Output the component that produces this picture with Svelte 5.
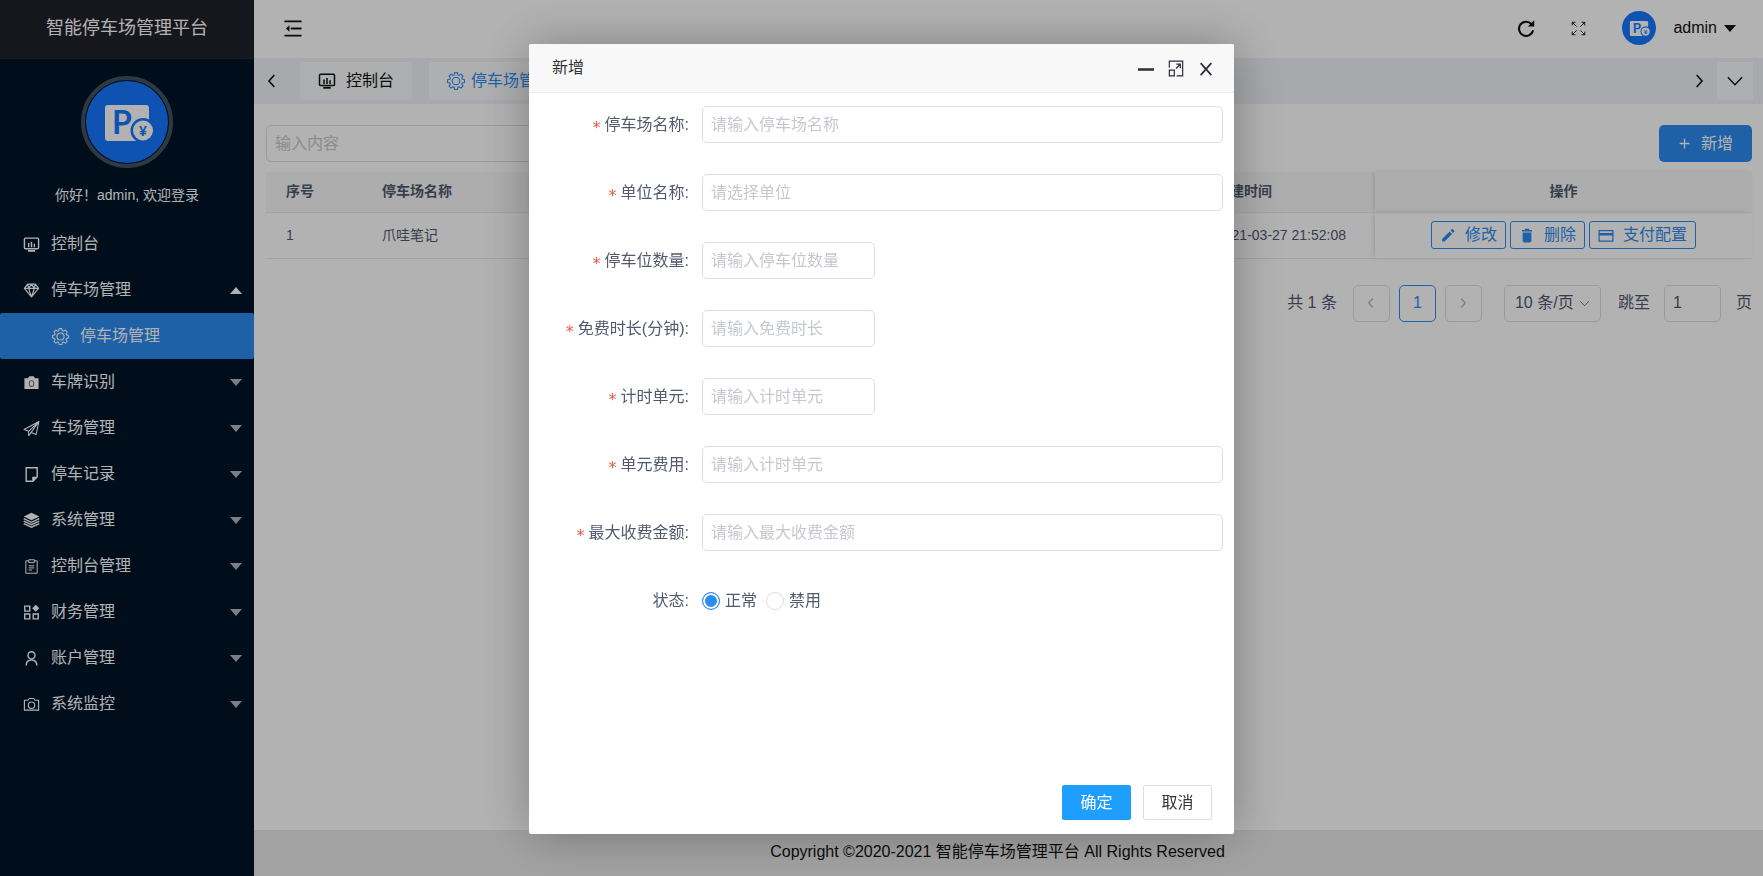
<script>
    const icons = {
        console: '<rect x="2" y="3" width="20" height="15" rx="1.5" fill="none" stroke="currentColor" stroke-width="2"/><path d="M8 10v6M12 8v8M16 11v5" stroke="currentColor" stroke-width="2"/><path d="M7 21h10" stroke="currentColor" stroke-width="2.5"/>',
        diamond: '<path d="M6.5 3h11L22 9 12 21 2 9zM2 9h20M8 9l4 12 4-12M6.5 3 8 9l4-6 4 6 1.5-6" fill="none" stroke="currentColor" stroke-width="1.7" stroke-linejoin="round"/>',
        gear: '<path d="M10 1.5h4l.8 3.2 1.7.7 2.8-1.7 2.8 2.9-1.7 2.7.7 1.8 3.2.8v3.800l-3.200.8-.7 1.700 1.700 2.800-2.800 2.800-2.800-1.700-1.700.7-.8 3.200h-4l-.8-3.200-1.700-.7-2.800 1.700L2 21l1.700-2.800-.7-1.700-3.200-.8v-3.800l3.200-.8.7-1.800L2 6.600l2.700-2.900 2.800 1.700 1.700-.7z" transform="translate(1 -.5) scale(.92)" fill="none" stroke="currentColor" stroke-width="1.6" stroke-linejoin="round"/><circle cx="12" cy="12" r="5" fill="none" stroke="currentColor" stroke-width="1.5"/>',
        camera: '<path d="M2 6h5l2-3h6l2 3h5v15H2z" fill="currentColor"/><rect x="9" y="9.5" width="6" height="8" rx="2.5" fill="none" stroke="#6b7480" stroke-width="1.5"/>',
        plane: '<path d="M22.5 2 18.5 20.5 11.5 17.5 8 22V16L1.5 13.5zM22.5 2 8 16M11.5 17.5 22.5 2" fill="none" stroke="currentColor" stroke-width="1.5" stroke-linejoin="round"/>',
        note: '<path d="M4.5 2.5h15.5v13L14 21.5H4.5z" fill="none" stroke="currentColor" stroke-width="2"/><path d="M13 22v-7h7z" fill="currentColor"/>',
        layers: '<path d="M12 1 23 6.5 12 11.5 1 6.5z" fill="currentColor"/><path d="M1 9.5 12 14.5 23 9.5M1 13 12 18 23 13M1 16.5 12 21.5 23 16.5" fill="none" stroke="currentColor" stroke-width="2"/>',
        clipboard: '<path d="M8 4H4v17.500h16V4h-4M8 2.500h8v4H8zM8 11h8M8 14h8M8 17h5" fill="none" stroke="currentColor" stroke-width="1.4"/>',
        apps: '<path d="M2.500 3h7v7h-7zM2.500 14h7v7h-7zM14.500 14h7v7h-7z" fill="none" stroke="currentColor" stroke-width="2"/><path d="m18 1 5 5-5 5-5-5z" fill="currentColor"/>',
        user: '<circle cx="12" cy="7.500" r="5" fill="none" stroke="currentColor" stroke-width="2"/><path d="M4.500 22c0-5 3-8 7.500-8s7.500 3 7.500 8" fill="none" stroke="currentColor" stroke-width="2"/>',
        monitor: '<path d="M2 6h5l2-2.500h6L17 6h5v14H2z" fill="none" stroke="currentColor" stroke-width="1.6" stroke-linejoin="round"/><circle cx="12" cy="13" r="4.5" fill="none" stroke="currentColor" stroke-width="1.6"/>',
        fold: '<path d="M1 2h22M10 12h13M1 22h22" stroke="currentColor" stroke-width="2.6" stroke-linecap="round"/><path d="M7 7.500v9l-5-4.500z" fill="currentColor"/>',
        refresh: '<path d="M19.500 7A9.500 9.500 0 1 0 21.500 15" fill="none" stroke="currentColor" stroke-width="2.8"/><path d="M23 1.500V10h-8.500z" fill="currentColor"/>',
        full: '<path d="M2 7V2h5M2 2l7 7M17 2h5v5M22 2l-7 7M2 17v5h5M2 22l7-7M22 17v5h-5M22 22l-7-7" fill="none" stroke="currentColor" stroke-width="1.5"/>',
        left: '<path d="m15.500 3-8 9 8 9" fill="none" stroke="currentColor" stroke-width="2.4"/>',
        right: '<path d="m8.500 3 8 9-8 9" fill="none" stroke="currentColor" stroke-width="2.4"/>',
        down: '<path d="m2.500 7 9.500 10L21.500 7" fill="none" stroke="currentColor" stroke-width="1.8"/>',
        plus: '<path d="M12 3v18M3 12h18" stroke="currentColor" stroke-width="2.4"/>',
        edit: '<path d="M2.500 21.500v-4L14.500 5.500l4 4-12 12zM16 4l2-2q1-.8 2 0l2 2q.8 1 0 2l-2 2z" fill="currentColor"/>',
        trash: '<path d="M4 3h4l1-2h6l1 2h4v2.500H4zM5 7h14v13.500q0 2.500-2.500 2.500h-9Q5 23 5 20.500z" fill="currentColor"/>',
        card: '<path d="M1 4h22v17H1z" fill="none" stroke="currentColor" stroke-width="2"/><path d="M1 8h22v4H1z" fill="currentColor"/>',
        expand: '<path d="M2 11V1h20v22h-9M2 14.500h7.500V23H2zM12 12l6-6M12.500 5.500H18.500v6" fill="none" stroke="currentColor" stroke-width="1.8"/>',
        minus: '<path d="M0 13.500h24" stroke="currentColor" stroke-width="4"/>',
        close: '<path d="m4 4 16 18M20 4 4 22" stroke="currentColor" stroke-width="2.6"/>'
    };

    const menu = [
        { icon: 'console', text: '控制台' },
        { icon: 'diamond', text: '停车场管理', open: true, children: [{ icon: 'gear', text: '停车场管理' }] },
        { icon: 'camera', text: '车牌识别', children: [] },
        { icon: 'plane', text: '车场管理', children: [] },
        { icon: 'note', text: '停车记录', children: [] },
        { icon: 'layers', text: '系统管理', children: [] },
        { icon: 'clipboard', text: '控制台管理', children: [] },
        { icon: 'apps', text: '财务管理', children: [] },
        { icon: 'user', text: '账户管理', children: [] },
        { icon: 'monitor', text: '系统监控', children: [] }
    ];

    const fields = [
        { id: 'name', label: '停车场名称', placeholder: '请输入停车场名称' },
        { id: 'org', label: '单位名称', placeholder: '请选择单位' },
        { id: 'count', label: '停车位数量', placeholder: '请输入停车位数量', short: true },
        { id: 'freeTime', label: '免费时长(分钟)', placeholder: '请输入免费时长', short: true },
        { id: 'unitTime', label: '计时单元', placeholder: '请输入计时单元', short: true },
        { id: 'unitCost', label: '单元费用', placeholder: '请输入计时单元' },
        { id: 'maxCost', label: '最大收费金额', placeholder: '请输入最大收费金额' }
    ];

    let status = $state('1');
</script>

{#snippet icon(name)}
    <svg class="icon {name}" viewBox="0 0 24 24" aria-hidden="true">{@html icons[name]}</svg>
{/snippet}

{#snippet logo()}
    <svg class="logo" viewBox="0 0 82 82" aria-hidden="true">
        <circle cx="41" cy="41" r="41" fill="#1677ff" />
        <rect x="19" y="24" width="44" height="36" rx="3" fill="#fff" />
        <text x="26" y="53" font-family="Lato" font-size="32" font-weight="bold" fill="#1677ff">P</text>
        <circle cx="57" cy="49.5" r="12.5" fill="#1677ff" />
        <circle cx="57" cy="49.5" r="10" fill="#fff" />
        <text x="57" y="54.5" font-size="14" font-weight="bold" text-anchor="middle" fill="#1677ff">¥</text>
    </svg>
{/snippet}

<div class="app">
    <aside>
        <div class="brand">智能停车场管理平台</div>
        <div class="profile">
            <div class="avatar">{@render logo()}</div>
            <div class="hello">你好！admin, 欢迎登录</div>
        </div>
        <nav>
            {#each menu as item}
                <a class="item" href="#menu">
                    {@render icon(item.icon)}
                    <span>{item.text}</span>
                    {#if item.children}
                        <i class="caret" class:up={item.open}></i>
                    {/if}
                </a>
                {#if item.open}
                    {#each item.children as child}
                        <a class="item child" href="#menu">
                            {@render icon(child.icon)}
                            <span>{child.text}</span>
                        </a>
                    {/each}
                {/if}
            {/each}
        </nav>
    </aside>

    <div class="main">
        <header>
            <button class="plain" aria-label="收起">{@render icon('fold')}</button>
            <div class="tools">
                <button class="plain" aria-label="刷新">{@render icon('refresh')}</button>
                <button class="plain" aria-label="全屏">{@render icon('full')}</button>
                <a class="account" href="#user">
                    {@render logo()}
                    <span>admin</span>
                    <i class="caret"></i>
                </a>
            </div>
        </header>

        <div class="tabs">
            <button class="plain arrow" aria-label="向左">{@render icon('left')}</button>
            <a class="tab" href="#console">{@render icon('console')}控制台</a>
            <a class="tab current" href="#parking">{@render icon('gear')}停车场管理</a>
            <button class="plain arrow push" aria-label="向右">{@render icon('right')}</button>
            <button class="plain more" aria-label="更多">{@render icon('down')}</button>
        </div>

        <main>
            <div class="toolbar">
                <input class="field search" type="text" placeholder="输入内容" aria-label="输入内容" />
                <button class="add">{@render icon('plus')}新增</button>
            </div>

            <table>
                <colgroup>
                    <col class="c-index" />
                    <col class="c-name" />
                    <col />
                    <col class="c-time" />
                    <col class="c-action" />
                </colgroup>
                <thead>
                    <tr>
                        <th>序号</th>
                        <th>停车场名称</th>
                        <th></th>
                        <th>创建时间</th>
                        <th class="fixed">操作</th>
                    </tr>
                </thead>
                <tbody>
                    <tr>
                        <td>1</td>
                        <td>爪哇笔记</td>
                        <td></td>
                        <td>2021-03-27 21:52:08</td>
                        <td class="fixed">
                            <div class="actions">
                                <button>{@render icon('edit')}修改</button>
                                <button>{@render icon('trash')}删除</button>
                                <button>{@render icon('card')}支付配置</button>
                            </div>
                        </td>
                    </tr>
                </tbody>
            </table>

            <div class="pager">
                <span class="total">共 1 条</span>
                <button class="page" aria-label="上一页">{@render icon('left')}</button>
                <button class="page on">1</button>
                <button class="page" aria-label="下一页">{@render icon('right')}</button>
                <div class="size">
                    <select aria-label="每页条数">
                        <option>10 条/页</option>
                    </select>
                    {@render icon('down')}
                </div>
                <label for="jump">跳至</label>
                <input id="jump" class="field jump" type="text" value="1" />
                <span>页</span>
            </div>
        </main>

        <footer>Copyright ©2020-2021 智能停车场管理平台 All Rights Reserved</footer>
    </div>
</div>

<div class="mask">
    <div class="modal" role="dialog" aria-labelledby="modal-title">
        <div class="modal-head">
            <span id="modal-title">新增</span>
            <div class="window">
                <button class="plain" aria-label="最小化">{@render icon('minus')}</button>
                <button class="plain" aria-label="最大化">{@render icon('expand')}</button>
                <button class="plain" aria-label="关闭">{@render icon('close')}</button>
            </div>
        </div>
        <form>
            {#each fields as f}
                <div class="row">
                    <label class="name" for={f.id}><span class="star">*</span>{f.label}:</label>
                    <input id={f.id} class="field" class:short={f.short} type="text" placeholder={f.placeholder} />
                </div>
            {/each}
            <div class="row">
                <span class="name" id="status-label">状态:</span>
                <div class="radios" role="radiogroup" aria-labelledby="status-label">
                    <label><input type="radio" name="status" value="1" bind:group={status} />正常</label>
                    <label><input type="radio" name="status" value="0" bind:group={status} />禁用</label>
                </div>
            </div>
        </form>
        <div class="modal-foot">
            <button class="ok">确定</button>
            <button>取消</button>
        </div>
    </div>
</div>

<style>
    :global(body) {
        margin: 0;
        font-family: "Liberation Sans", "Noto Sans CJK SC", sans-serif;
        font-size: 16px;
        line-height: 24px;
        color: #515a6e;
    }

    * {
        box-sizing: border-box;
    }

    a {
        color: inherit;
        text-decoration: none;
    }

    button, input, select {
        font: inherit;
        color: inherit;
        margin: 0;
    }

    button {
        display: flex;
        align-items: center;
        justify-content: center;
        cursor: pointer;
    }

    .plain {
        border: 0;
        padding: 0;
        background: none;
        color: #111;
    }

    .icon {
        width: 18px;
        height: 18px;
        flex: none;
        overflow: visible;
    }

    .logo {
        display: block;
        flex: none;
    }

    .caret {
        width: 0;
        border: 6px solid transparent;
        border-top: 7px solid currentColor;
        border-bottom: 0;
    }

    .caret.up {
        border-top: 0;
        border-bottom: 7px solid #fff;
    }

    .app {
        display: flex;
        min-height: 100vh;
    }

    aside {
        width: 254px;
        flex: none;
        background: #001529;
        color: #fff;
    }

    .brand {
        height: 59px;
        line-height: 56px;
        text-align: center;
        font-size: 18px;
        background: #20222a;
        border-bottom: 1px solid #1d2b42;
    }

    .profile {
        display: flex;
        flex-direction: column;
        align-items: center;
        padding: 17px 0 14px;
    }

    .avatar {
        padding: 1px;
        border: 4px solid #43525f;
        border-radius: 50%;
    }

    .avatar .logo {
        width: 82px;
        height: 82px;
    }

    .hello {
        margin-top: 15px;
        font-size: 14px;
    }

    .item {
        display: flex;
        align-items: center;
        gap: 11px;
        height: 46px;
        padding: 0 12px 0 23px;
    }

    .item .icon {
        width: 17px;
        height: 17px;
    }

    .item .caret {
        margin-left: auto;
        color: #b0b6bd;
    }

    .item.child {
        padding-left: 52px;
        background: #2d8cf0;
        border-radius: 2px;
    }

    .main {
        flex: 1;
        min-width: 0;
        display: flex;
        flex-direction: column;
        background: #fff;
    }

    header {
        display: flex;
        align-items: center;
        justify-content: space-between;
        height: 58px;
        padding: 0 27px 2px 29px;
    }

    .icon.fold {
        width: 20px;
        height: 17px;
    }

    .icon.full {
        width: 15px;
        height: 15px;
    }

    .tools {
        display: flex;
        align-items: center;
        gap: 36px;
        color: #111;
    }

    .account {
        display: flex;
        align-items: center;
        gap: 7px;
    }

    .account .logo {
        width: 34px;
        height: 34px;
        margin-right: 10px;
    }

    .tabs {
        display: flex;
        align-items: center;
        height: 46px;
        padding: 0 10px;
        background: #eff2f6;
    }

    .arrow {
        width: 16px;
    }

    .arrow .icon {
        width: 16px;
        height: 16px;
    }

    .push {
        margin-left: auto;
    }

    .tab {
        display: flex;
        align-items: center;
        gap: 10px;
        height: 38px;
        margin-left: 17px;
        padding: 0 18px;
        border-radius: 3px;
        background: #fafbfc;
        color: #111;
    }

    .arrow + .tab {
        margin-left: 20px;
    }

    .tab.current {
        gap: 6px;
        color: #2d8cf0;
    }

    .more {
        width: 36px;
        height: 38px;
        margin-left: 10px;
        background: #fafbfc;
    }

    main {
        flex: 1;
        padding: 21px 11px 0 12px;
    }

    .toolbar {
        display: flex;
        justify-content: space-between;
        margin-bottom: 10px;
    }

    .field {
        height: 37px;
        padding: 0 8px;
        border: 1px solid #dcdee2;
        border-radius: 5px;
        background: #fff;
        color: #515a6e;
    }

    .field::placeholder {
        color: #c5c8ce;
        opacity: 1;
    }

    .search {
        width: 340px;
    }

    .add {
        gap: 10px;
        height: 37px;
        padding: 0 19px;
        border: 0;
        border-radius: 5px;
        background: #2d8cf0;
        color: #fff;
    }

    .add .icon {
        width: 13px;
        height: 13px;
    }

    table {
        width: 100%;
        table-layout: fixed;
        border-collapse: collapse;
        font-size: 14px;
    }

    .c-index {
        width: 96px;
    }

    .c-name {
        width: 200px;
    }

    .c-time {
        width: 179px;
    }

    .c-action {
        width: 377px;
    }

    th, td {
        padding: 0 20px;
        text-align: left;
        border-bottom: 1px solid #e8eaec;
        white-space: nowrap;
    }

    th {
        height: 40px;
        padding-bottom: 2px;
        background: #f8f8f9;
    }

    td {
        height: 46px;
    }

    .fixed {
        text-align: center;
        box-shadow: -2px 0 6px -2px rgba(0, 0, 0, .2);
    }

    .actions {
        display: flex;
        justify-content: center;
        gap: 4px;
        font-size: 16px;
    }

    .actions button {
        gap: 9px;
        height: 28px;
        padding: 0 8px;
        border: 1px solid #2d8cf0;
        border-radius: 3px;
        background: #fff;
        color: #2d8cf0;
    }

    .actions .icon {
        width: 16px;
        height: 15px;
    }

    .pager {
        display: flex;
        align-items: center;
        justify-content: flex-end;
        margin-top: 26px;
    }

    .page {
        width: 37px;
        height: 37px;
        margin-right: 9px;
        padding: 0;
        border: 1px solid #dcdee2;
        border-radius: 5px;
        background: #fff;
        color: #b0b4ba;
    }

    .page .icon {
        width: 12px;
        height: 12px;
    }

    .page.on {
        border-color: #2d8cf0;
        color: #2d8cf0;
    }

    .total {
        margin-right: 16px;
    }

    .size {
        position: relative;
        margin: 0 17px 0 13px;
    }

    .size select {
        display: block;
        width: 97px;
        height: 37px;
        padding: 0 10px;
        border: 1px solid #dcdee2;
        border-radius: 5px;
        background: #fff;
        appearance: none;
    }

    .size .icon {
        position: absolute;
        right: 11px;
        top: 13px;
        width: 11px;
        height: 11px;
        stroke-width: 3;
        pointer-events: none;
    }

    .jump {
        width: 57px;
        margin: 0 15px 0 14px;
    }

    footer {
        height: 46px;
        line-height: 44px;
        padding-right: 22px;
        text-align: center;
        background: #e9e9e9;
        color: #111;
    }

    .mask {
        position: fixed;
        inset: 0;
        display: flex;
        justify-content: center;
        padding: 44px 0 42px;
        background: rgba(0, 0, 0, .3);
    }

    .modal {
        display: flex;
        flex-direction: column;
        width: 40vw;
        min-width: 560px;
        border-radius: 2px;
        background: #fff;
        box-shadow: 1px 1px 50px rgba(0, 0, 0, .3);
        overflow: auto;
    }

    .modal-head {
        display: flex;
        align-items: center;
        justify-content: space-between;
        height: 49px;
        padding: 0 20px 0 23px;
        border-bottom: 1px solid #eee;
        background: #f8f8f8;
        color: #333;
    }

    .window {
        display: flex;
        gap: 14px;
    }

    .window .plain {
        color: #2e2d3c;
    }

    .window .icon {
        width: 16px;
        height: 17px;
    }

    form {
        flex: 1;
        padding: 13px 11px 0 0;
    }

    .row {
        display: flex;
        align-items: center;
        height: 37px;
        margin-bottom: 31px;
    }

    .name {
        width: 173px;
        padding-right: 13px;
        text-align: right;
        white-space: nowrap;
    }

    .star {
        display: inline-block;
        width: 9px;
        height: 20px;
        margin-right: 4px;
        line-height: 26px;
        vertical-align: middle;
        font-family: "DejaVu Sans", sans-serif;
        color: #ed5b4a;
    }

    .row .field {
        flex: 1;
        min-width: 0;
    }

    .row .short {
        flex: none;
        width: 173px;
    }

    .radios {
        display: flex;
        gap: 9px;
    }

    .radios label {
        display: flex;
        align-items: center;
        gap: 5px;
    }

    .radios input {
        width: 18px;
        height: 18px;
        appearance: none;
        border: 1px solid #dcdee2;
        border-radius: 50%;
        background: #fff;
    }

    .radios input:checked {
        border-color: #2d8cf0;
        background: #2d8cf0;
        box-shadow: inset 0 0 0 2px #fff;
    }

    .modal-foot {
        display: flex;
        justify-content: flex-end;
        gap: 12px;
        padding: 0 22px 14px;
    }

    .modal-foot button {
        width: 69px;
        height: 35px;
        padding: 0;
        border: 1px solid #dedede;
        border-radius: 2px;
        background: #fff;
        color: #333;
    }

    .modal-foot .ok {
        border-color: #1e9fff;
        background: #1e9fff;
        color: #fff;
    }
</style>
